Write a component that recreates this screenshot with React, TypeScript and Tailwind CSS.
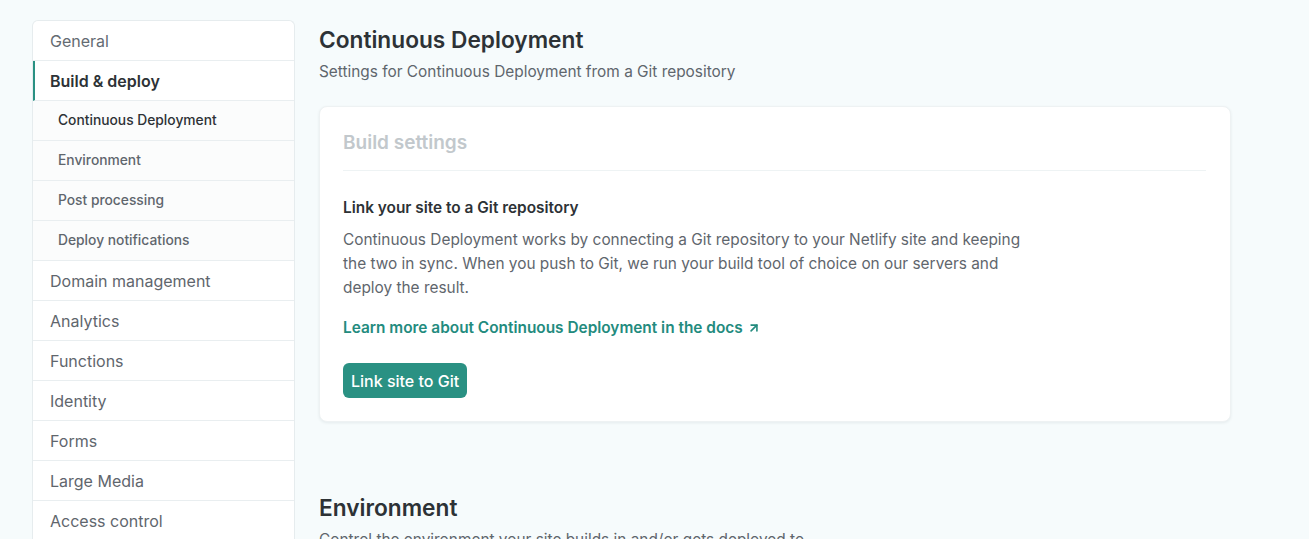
import { ArrowUpRight } from "lucide-react"

const topItems = ["General", "Build & deploy"]
const subItems = ["Continuous Deployment", "Environment", "Post processing", "Deploy notifications"]
const restItems = ["Domain management", "Analytics", "Functions", "Identity", "Forms", "Large Media", "Access control"]

function Sidebar() {
  return (
    <nav className="w-[263px] shrink-0 overflow-hidden rounded-t-md border border-b-0 border-[#e6ecee] bg-white">
      {topItems.map((label) => {
        const active = label === "Build & deploy"
        return (
          <div
            key={label}
            className={
              active
                ? "flex h-10 items-center border-b border-l-2 border-b-[#e9eef0] border-l-[#2a9183] pl-[15px] text-[16px] font-semibold text-[#2d3236]"
                : "flex h-10 items-center border-b border-[#e9eef0] pl-[17px] text-[16px] text-[#646b72]"
            }
          >
            {label}
          </div>
        )
      })}
      {subItems.map((label, i) => (
        <div
          key={label}
          className={
            i === 0
              ? "flex h-10 items-center border-b border-[#e9eef0] bg-[#fbfcfc] pl-[25px] text-[13.8px] font-medium text-[#2d3236]"
              : "flex h-10 items-center border-b border-[#e9eef0] bg-[#fbfcfc] pl-[25px] text-[13.8px] font-medium text-[#5f666d]"
          }
        >
          {label}
        </div>
      ))}
      {restItems.map((label) => (
        <div key={label} className="flex h-10 items-center border-b border-[#e9eef0] pl-[17px] text-[16px] text-[#5f666d]">
          {label}
        </div>
      ))}
    </nav>
  )
}

export default function App() {
  return (
    <div className="h-[539px] overflow-hidden bg-[#f6fbfc] font-['Inter','Noto_Sans',sans-serif] antialiased">
      <div className="flex gap-6 pl-8 pt-5">
        <Sidebar />
        <main className="w-[912px]">
          <section>
            <h1 className="mt-[6px] text-[22.7px] font-semibold leading-7 text-[#2d3236]">Continuous Deployment</h1>
            <p className="mt-[6px] text-[15.4px] leading-6 text-[#5f666d]">Settings for Continuous Deployment from a Git repository</p>

            <div className="mt-[22px] h-[316px] rounded-lg border border-[#eef2f3] bg-white pl-[23px] pr-6 pt-5 shadow-[0_1px_3px_rgba(30,50,60,0.08)]">
              <h2 className="border-b border-[#eef3f4] pb-[11px] text-[19px] font-semibold leading-8 text-[#c2c8cc]">Build settings</h2>
              <h3 className="mt-[25px] text-[15.4px] font-semibold leading-6 text-[#2d3236]">Link your site to a Git repository</h3>
              <p className="mt-2 max-w-[680px] text-[15.4px] leading-6 text-[#5f666d]">
                Continuous Deployment works by connecting a Git repository to your Netlify site and keeping the two in sync. When you push to Git, we run your build tool of choice on our servers and deploy the result.
              </p>
              <a className="mt-[16px] inline-flex items-center gap-1 text-[15.4px] font-semibold leading-6 text-[#238b7e]">
                Learn more about Continuous Deployment in the docs
                <ArrowUpRight className="size-[14px]" strokeWidth={2.75} />
              </a>
              <div className="mt-[23px]">
                <button className="h-[35px] rounded-md bg-[#2a9183] px-2 text-[16px] font-medium text-white">Link site to Git</button>
              </div>
            </div>
          </section>

          <section className="mt-[72px]">
            <h1 className="text-[22.7px] font-semibold leading-7 text-[#2d3236]">Environment</h1>
            <p className="mt-[6px] text-[15.4px] leading-6 text-[#5f666d]">Control the environment your site builds in and/or gets deployed to.</p>
          </section>
        </main>
      </div>
    </div>
  )
}
